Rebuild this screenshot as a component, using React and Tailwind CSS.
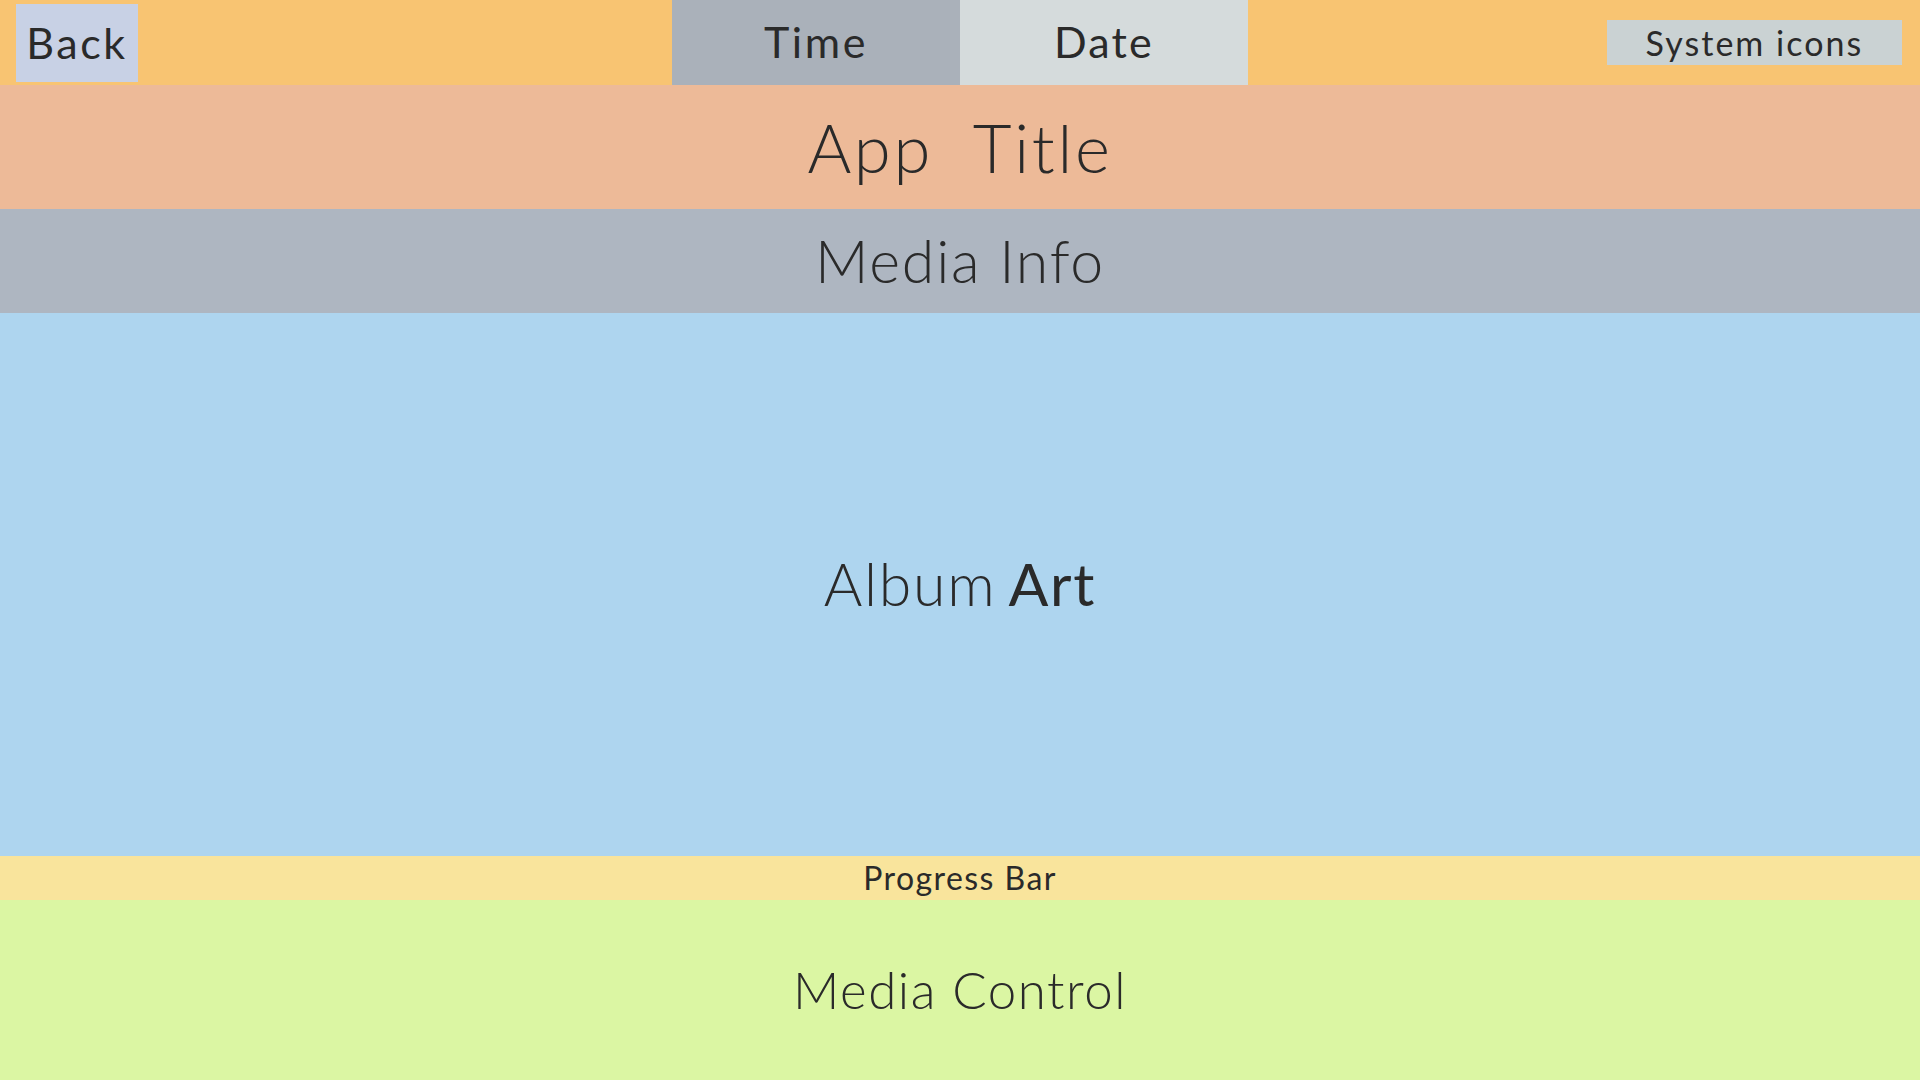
import React from 'react'

const App = () => {
  return (
    <div className="w-[1920px] h-[1080px] flex flex-col text-[#2a2a2a] font-['Lato','Open_Sans',sans-serif]">
      {/* status bar */}
      <div className="h-[85px] bg-[#f8c472] flex items-stretch">
        <div className="w-[672px] flex items-start pl-[16px] pt-[4px]">
          <div className="w-[122px] h-[78px] bg-[#c8d1e5] flex items-center justify-center text-[43px] tracking-[0.06em]">Back</div>
        </div>
        <div className="w-[288px] bg-[#aab1ba] flex items-center justify-center text-[43px] tracking-[0.06em]">Time</div>
        <div className="w-[288px] bg-[#d5dbdc] flex items-center justify-center text-[43px] tracking-[0.05em]">Date</div>
        <div className="flex-1 flex items-start justify-end pt-[20px] pr-[18px]">
          <div className="w-[295px] h-[45px] bg-[#cad2d3] flex items-center justify-center text-[34px] tracking-[0.06em]">System icons</div>
        </div>
      </div>

      <div className="h-[124px] bg-[#edba98] flex items-center justify-center text-[67px] font-light tracking-[0.04em]">App&nbsp; Title</div>
      <div className="h-[104px] bg-[#aeb6c1] flex items-center justify-center text-[59px] font-light tracking-[0.03em]">Media Info</div>
      <div className="h-[543px] bg-[#aed5ef] flex items-center justify-center text-[59px] font-light tracking-[0.03em]">
        Album <span className="font-normal ml-3">Art</span>
      </div>
      <div className="h-[44px] bg-[#f9e49c] flex items-center justify-center text-[32px] tracking-[0.045em]">Progress Bar</div>
      <div className="flex-1 bg-[#dbf6a3] flex items-center justify-center text-[51px] font-light tracking-[0.03em]">Media Control</div>
    </div>
  )
}

export default App
